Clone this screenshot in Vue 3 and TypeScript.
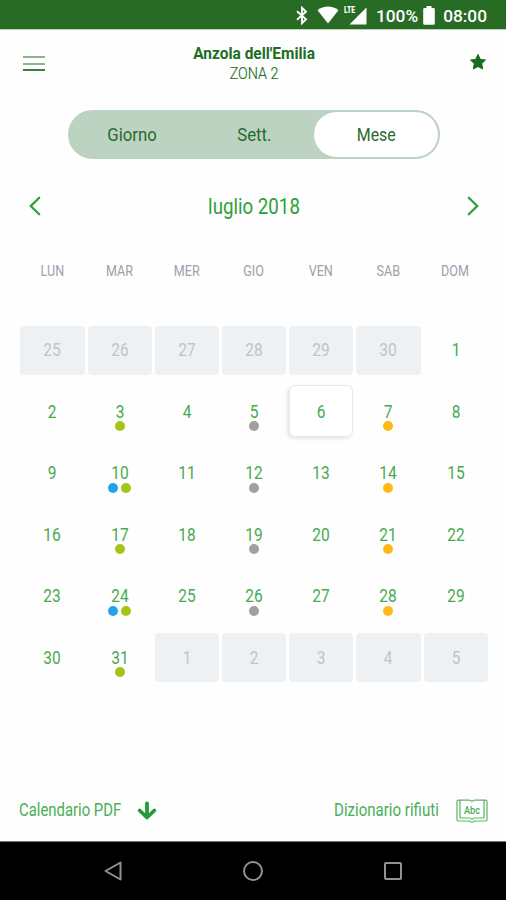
<script setup lang="ts">
interface Day { n: number; muted?: boolean; today?: boolean; dots: string[] }

const weekdays: string[] = ['LUN', 'MAR', 'MER', 'GIO', 'VEN', 'SAB', 'DOM']
const views: string[] = ['Giorno', 'Sett.', 'Mese']

const pickups: Record<number, string[]> = {
  3: ['lime'], 5: ['gray'], 7: ['amber'],
  10: ['blue', 'lime'], 12: ['gray'], 14: ['amber'],
  17: ['lime'], 19: ['gray'], 21: ['amber'],
  24: ['blue', 'lime'], 26: ['gray'], 28: ['amber'],
  31: ['lime'],
}

const range = (from: number, to: number): number[] =>
  Array.from({ length: to - from + 1 }, (_, i) => from + i)

const days: Day[] = [
  ...range(25, 30).map((n) => ({ n, muted: true, dots: [] })),
  ...range(1, 31).map((n) => ({ n, today: n === 6, dots: pickups[n] ?? [] })),
  ...range(1, 5).map((n) => ({ n, muted: true, dots: [] })),
]
</script>

<template>
  <div class="screen">
    <div class="status">
      <svg class="bt" width="12" height="19" viewBox="0 0 12 19"><path d="M1 5.2 10 13.3 6 17.2V1.8L10 5.7 1 13.8" fill="none" stroke="#fff" stroke-width="1.9" /></svg>
      <svg class="wifi" width="22" height="18" viewBox="0 0 22 18"><path d="M11 17.5.5 4.2C6.500-.6 15.500-.6 21.500 4.200Z" fill="#fff" /></svg>
      <div class="signal">
        <span class="lte">LTE</span>
        <svg width="18" height="18" viewBox="0 0 18 18"><path d="M17.500.5V17.500H.5Z" fill="#fff" /></svg>
      </div>
      <span class="pct">100%</span>
      <svg class="battery" width="12" height="19" viewBox="0 0 12 19"><path d="M3.500 0h5v2H10.500q1.300 0 1.300 1.300V17.500q0 1.300-1.300 1.300H1.500Q.2 18.800.2 17.500V3.300Q.2 2 1.500 2H3.500Z" fill="#fff" /></svg>
      <span class="clock">08:00</span>
    </div>

    <header class="header">
      <div class="burger"><i></i><i></i><i></i></div>
      <div class="place">
        <strong>Anzola dell'Emilia</strong>
        <span>ZONA 2</span>
      </div>
      <svg class="star" width="18" height="18" viewBox="0 0 18 18"><path d="M9 1.500 11.400 6.400 16.500 7 12.700 10.700 13.700 16 9 13.500 4.300 16 5.300 10.700 1.500 7 6.600 6.400Z" fill="#176c1d" stroke="#176c1d" stroke-width="1" stroke-linejoin="round" /></svg>
    </header>

    <div class="switch">
      <div v-for="v in views" :key="v" class="view" :class="{ active: v === 'Mese' }"><span>{{ v }}</span></div>
    </div>

    <div class="month">
      <svg width="12" height="20" viewBox="0 0 12 20"><path d="M10.200 1.700 1.800 10l8.400 8.300" /></svg>
      <span>luglio 2018</span>
      <svg width="12" height="20" viewBox="0 0 12 20"><path d="M1.800 1.700 10.200 10l-8.400 8.300" /></svg>
    </div>

    <div class="weekdays">
      <div v-for="w in weekdays" :key="w"><span>{{ w }}</span></div>
    </div>

    <div class="days">
      <div v-for="(d, i) in days" :key="i" class="day" :class="{ muted: d.muted, today: d.today }">
        <span class="num">{{ d.n }}</span>
        <div class="dots"><i v-for="c in d.dots" :key="c" :class="c"></i></div>
      </div>
    </div>

    <footer class="footer">
      <div class="link pdf">
        <span>Calendario PDF</span>
        <svg width="20" height="20" viewBox="0 0 20 20"><path d="M10 2.500V16M2.700 9.500 10 16.500 17.300 9.500" fill="none" stroke="#249b38" stroke-width="3.800" stroke-linecap="round" stroke-linejoin="round" /></svg>
      </div>
      <div class="link dict">
        <span>Dizionario rifiuti</span>
        <svg width="32" height="24" viewBox="0 0 32 24">
          <g fill="none" stroke="#57b563" stroke-width="1.200" stroke-linejoin="round">
            <path d="M4 1.200H13Q15 1.200 16 2.500 17 1.200 19 1.200H28V19H19Q17 19 16 20.300 15 19 13 19H4Z" />
            <path d="M4 1.200H2.500Q1 1.200 1 2.700V20.500Q1 22 2.500 22H13.500L15 23H17L18.500 22H29.500Q31 22 31 20.500V2.700Q31 1.200 29.500 1.200H28" />
          </g>
          <text x="8" y="14.800" textLength="16" lengthAdjust="spacingAndGlyphs">Abc</text>
        </svg>
      </div>
    </footer>

    <nav class="nav">
      <svg width="20" height="22" viewBox="0 0 20 22"><path d="M17.500 2.500V19.500L2.500 11Z" /></svg>
      <svg width="22" height="22" viewBox="0 0 22 22"><circle cx="11" cy="11" r="9" /></svg>
      <svg width="20" height="20" viewBox="0 0 20 20"><rect x="2" y="2" width="16" height="16" rx="1" /></svg>
    </nav>
  </div>
</template>

<style>
body { margin: 0; background: #fff; }
</style>

<style scoped>
.screen {
  width: 506px; height: 900px; overflow: hidden; box-sizing: border-box;
  display: flex; flex-direction: column; background: #fefefe;
  font-family: Roboto, "Liberation Sans", sans-serif;
}
.screen span, .screen strong { display: inline-block; white-space: nowrap; }
svg { display: block; flex: none; }

.status {
  height: 29px; flex: none; background: #276b25; border-bottom: 1px solid #bdd3b9;
  display: flex; align-items: center; justify-content: flex-end;
  padding-right: 19px; box-sizing: content-box; color: #fff;
}
.bt { margin: 2px 9px 0 0; }
.wifi { margin: 0 5px 0 0; }
.signal { position: relative; width: 23px; display: flex; justify-content: flex-end; margin: 2px 9px 0 0; }
.lte { position: absolute; left: 0; top: -2px; font-size: 9.500px; line-height: 10px; font-weight: 900; transform: scaleX(.7); transform-origin: left; }
.pct, .clock { font-size: 17.300px; font-weight: 500; line-height: 20px; margin-top: 2px; }
.battery { margin: 1px 8px 0 5px; }

.header {
  height: 80px; flex: none; box-sizing: border-box; padding: 14px 19px 0 23px;
  display: grid; grid-template-columns: 22px 1fr 18px; align-items: start; color: #1d6d25;
}
.burger { display: flex; flex-direction: column; gap: 4.500px; padding-top: 12px; }
.burger i { height: 2px; background: #8fb290; }
.burger i:last-child { background: #37823b; }
.place { display: flex; flex-direction: column; align-items: center; padding-right: 6px; }
.place strong { font-size: 16px; line-height: 20px; font-weight: 700; transform: scaleX(.965); }
.place span { font-size: 16.500px; line-height: 19px; font-weight: 300; transform: scaleX(.87); -webkit-text-stroke: .2px; }
.star { margin-top: 9px; }

.switch {
  width: 372px; height: 49px; flex: none; margin: 0 0 0 68px; box-sizing: border-box;
  border: 2px solid #bdd3c1; border-radius: 25px; background: #bdd3c1; color: #276b2c;
  display: grid; grid-template-columns: 124px 120px 124px;
}
.view { display: flex; align-items: center; justify-content: center; font-size: 19px; border-radius: 23px; }
.view:first-child { padding-left: 1px; }
.view span { transform: scaleX(.88); }
.view.active span { transform: scaleX(.84); }
.view.active { background: #fff; }

.month {
  height: 40px; flex: none; margin: 27px 27px 0 29px;
  display: flex; align-items: center; justify-content: space-between; color: #2da139;
}
.month svg path { fill: none; stroke: #2da139; stroke-width: 2.300; stroke-linecap: round; }
.month span { font-size: 22px; font-weight: 400; transform: scaleX(.85); }

.weekdays {
  margin: 35px 17px 0 18.700px; height: 20px; flex: none;
  display: grid; grid-template-columns: repeat(7, 67.200px); color: #9da0aa;
}
.weekdays div { display: flex; justify-content: center; }
.weekdays span { font-size: 15.300px; line-height: 20px; transform: scaleX(.82); }

.days {
  flex: none; margin: 44.500px 0 0 20.400px;
  display: grid; grid-template-columns: repeat(7, 64.200px); grid-auto-rows: 49px;
  column-gap: 3px; row-gap: 12.500px;
}
.day { display: flex; flex-direction: column; align-items: center; border-radius: 4px; color: #46ab50; padding-top: 13.500px; box-sizing: border-box; }
.num { font-size: 17.800px; line-height: 21px; transform: scaleX(.87); }
.muted { background: #edf1f4; color: #bdc5ca; }
.today { margin: -1px 1px 0; padding-top: 14.500px; background: #fff; border-radius: 5px; box-shadow: 0 0 0 1px #e7e7e7, -2px 2px 4px 0 rgba(0, 0, 0, .14); }
.dots { display: flex; gap: 3.500px; margin-top: -.5px; }
.dots i { width: 10px; height: 10px; border-radius: 50%; }
.lime { background: #a5c515; }
.gray { background: #a0a0a0; }
.amber { background: #ffb914; }
.blue { background: #27a1e5; }

.footer {
  flex: 1; min-height: 0; display: flex; justify-content: space-between; align-items: flex-start;
  padding: 117px 18px 0 19px; color: #4bae58;
}
.link { display: flex; align-items: center; height: 24px; }
.link span { font-size: 17.500px; transform-origin: left; }
.pdf span { width: 118px; margin-top: -2px; transform: scaleX(.85); }
.dict span { width: 122px; margin-top: -3px; transform: scaleX(.86); }
.dict text { font-size: 11px; font-weight: 500; fill: #4bae58; }

.nav {
  height: 59px; flex: none; box-sizing: border-box; background: #000; border-top: 1px solid #777;
  display: flex; align-items: center; justify-content: space-between; padding: 0 103px 0 103px;
}
.nav svg * { fill: none; stroke: #929292; stroke-width: 2; stroke-linejoin: round; }
</style>
